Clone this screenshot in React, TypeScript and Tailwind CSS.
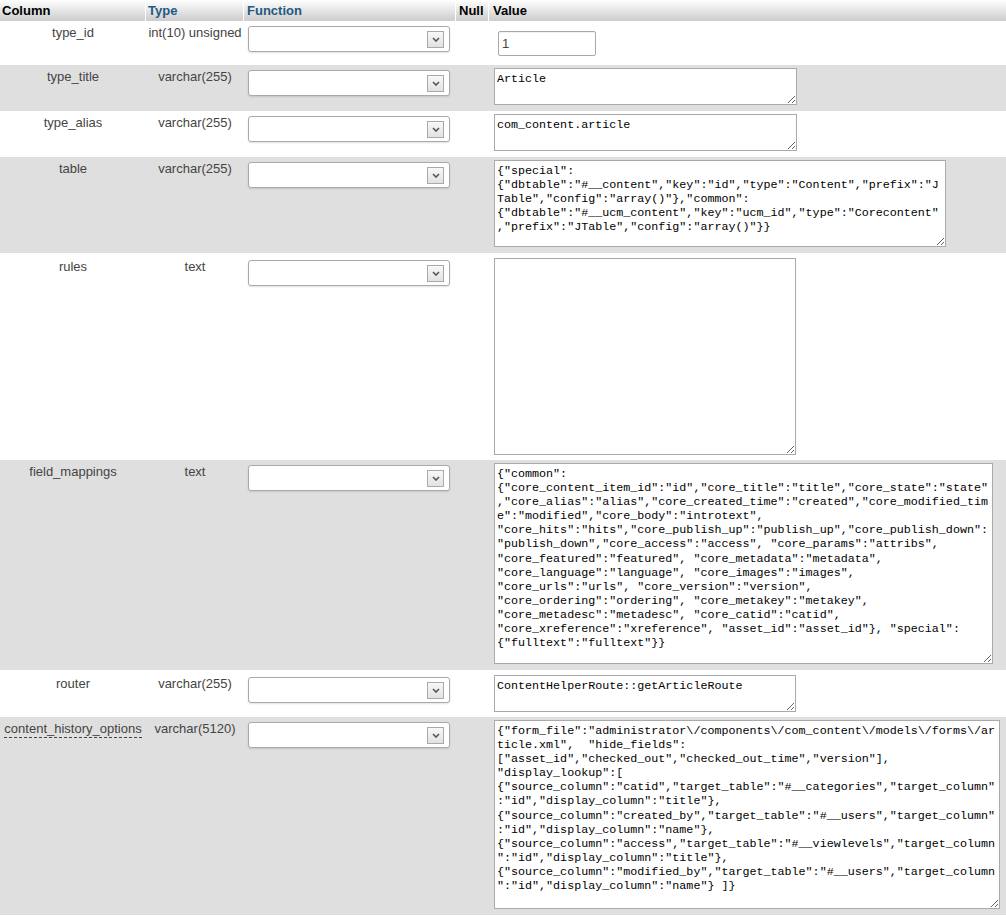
import React from "react";

type Field = {
  name: string;
  type: string;
  value: string;
  w?: number;
  h?: number;
  input?: boolean;
  dfn?: boolean;
  lower?: boolean;
};

const fields: Field[] = [
  { name: "type_id", type: "int(10) unsigned", value: "1", input: true },
  { name: "type_title", type: "varchar(255)", value: "Article", w: 303, h: 37 },
  { name: "type_alias", type: "varchar(255)", value: "com_content.article", w: 303, h: 37 },
  {
    name: "table",
    type: "varchar(255)",
    w: 452,
    h: 87,
    value: [
      '{"special":',
      '{"dbtable":"#__content","key":"id","type":"Content","prefix":"J',
      'Table","config":"array()"},"common":',
      '{"dbtable":"#__ucm_content","key":"ucm_id","type":"Corecontent"',
      ',"prefix":"JTable","config":"array()"}}',
    ].join("\n"),
  },
  { name: "rules", type: "text", value: "", w: 302, h: 197, lower: true },
  {
    name: "field_mappings",
    type: "text",
    w: 499,
    h: 201,
    value: [
      '{"common":',
      '{"core_content_item_id":"id","core_title":"title","core_state":"state"',
      ',"core_alias":"alias","core_created_time":"created","core_modified_tim',
      'e":"modified","core_body":"introtext",',
      '"core_hits":"hits","core_publish_up":"publish_up","core_publish_down":',
      '"publish_down","core_access":"access", "core_params":"attribs",',
      '"core_featured":"featured", "core_metadata":"metadata",',
      '"core_language":"language", "core_images":"images",',
      '"core_urls":"urls", "core_version":"version",',
      '"core_ordering":"ordering", "core_metakey":"metakey",',
      '"core_metadesc":"metadesc", "core_catid":"catid",',
      '"core_xreference":"xreference", "asset_id":"asset_id"}, "special":',
      '{"fulltext":"fulltext"}}',
    ].join("\n"),
  },
  { name: "router", type: "varchar(255)", value: "ContentHelperRoute::getArticleRoute", w: 302, h: 37, lower: true },
  {
    name: "content_history_options",
    type: "varchar(5120)",
    dfn: true,
    w: 506,
    h: 189,
    value: [
      '{"form_file":"administrator\\/components\\/com_content\\/models\\/forms\\/ar',
      'ticle.xml",  "hide_fields":',
      '["asset_id","checked_out","checked_out_time","version"],',
      '"display_lookup":[',
      '{"source_column":"catid","target_table":"#__categories","target_column"',
      ':"id","display_column":"title"},',
      '{"source_column":"created_by","target_table":"#__users","target_column"',
      ':"id","display_column":"name"},',
      '{"source_column":"access","target_table":"#__viewlevels","target_column',
      '":"id","display_column":"title"},',
      '{"source_column":"modified_by","target_table":"#__users","target_column',
      '":"id","display_column":"name"} ]}',
    ].join("\n"),
  },
];

const FunctionSelect = () => (
  <div className="flex h-[26px] w-[202px] items-center justify-end rounded-[3px] border border-[#aaa] bg-white pr-[5px] shadow-[0_1px_2px_rgba(0,0,0,0.12)]">
    <div className="flex h-[17px] w-[17px] items-center justify-center border border-[#aaa] bg-gradient-to-b from-[#f8f8f8] to-[#e2e2e2]">
      <svg width="8" height="5" viewBox="0 0 8 5">
        <path d="M1 1 L4 4 L7 1" fill="none" stroke="#555" strokeWidth="1.6" />
      </svg>
    </div>
  </div>
);

const grid = "grid grid-cols-[146px_98px_212px_33px_1fr]";

export default function App() {
  return (
    <div className="min-h-[916px] bg-white font-['Liberation_Sans',Arial,sans-serif] text-[13px] text-[#444]">
      {/* header */}
      <div className={`${grid} h-[21px] bg-gradient-to-b from-white to-[#cccccc] font-bold leading-[21px]`}>
        <div className="border-r border-white pl-[2px] text-black">Column</div>
        <div className="border-r border-white pl-[2px] text-[#235a81]">Type</div>
        <div className="border-r border-white pl-[3px] text-[#235a81]">Function</div>
        <div className="border-r border-white pl-[3px] text-black">Null</div>
        <div className="pl-[4px] text-black">Value</div>
      </div>

      {fields.map((f, i) => (
        <div key={f.name} className={`${grid} ${i % 2 === 1 ? "bg-[#dfdfdf]" : "bg-white"}`}>
          <div className={`${f.lower ? "pt-[6px]" : "pt-[4px]"} text-center leading-[15px]`}>
            {f.dfn ? (
              <span className="border-b border-dashed border-[#444] pb-[1px]">{f.name}</span>
            ) : (
              f.name
            )}
          </div>
          <div className={`${f.lower ? "pt-[6px]" : "pt-[4px]"} text-center leading-[15px]`}>{f.type}</div>
          <div className={`${f.lower ? "pt-[7px]" : "pt-[5px]"} pl-[4px]`}>
            <FunctionSelect />
          </div>
          <div />
          {f.input ? (
            <div className="pb-[9px] pl-[9px] pt-[10px]">
              <input
                defaultValue={f.value}
                className="h-[25px] w-[98px] rounded-[2px] border border-[#aaa] bg-white px-[3px] text-[13px] text-[#444] shadow-[inset_0_1px_1px_rgba(0,0,0,0.06)] outline-none"
              />
            </div>
          ) : (
            <div className={`${f.lower ? "pb-[5px] pt-[5px]" : "pb-[6px] pt-[3px]"} pl-[5px]`}>
              <textarea
                defaultValue={f.value}
                wrap="off"
                spellCheck={false}
                style={{ width: f.w, height: f.h }}
                className="block overflow-hidden whitespace-pre border border-[#aaa] bg-white px-[2px] pt-[3px] font-['Liberation_Mono','Courier_New',monospace] text-[11.7px] leading-[14.1px] text-black outline-none"
              />
            </div>
          )}
        </div>
      ))}
    </div>
  );
}
